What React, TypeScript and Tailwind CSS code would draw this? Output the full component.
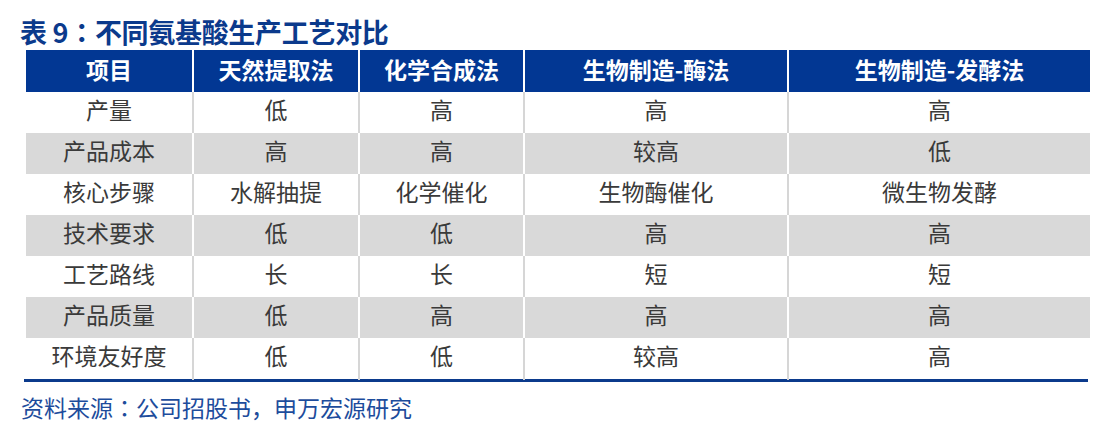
const font = { fontFamily: '"Noto Sans CJK SC", "Noto Sans", sans-serif' }
const tcFont = { fontFamily: '"Noto Sans CJK TC", sans-serif' }

const headers = ['项目', '天然提取法', '化学合成法', '生物制造-酶法', '生物制造-发酵法']

const rows: string[][] = [
  ['产量', '低', '高', '高', '高'],
  ['产品成本', '高', '高', '较高', '低'],
  ['核心步骤', '水解抽提', '化学催化', '生物酶催化', '微生物发酵'],
  ['技术要求', '低', '低', '高', '高'],
  ['工艺路线', '长', '长', '短', '短'],
  ['产品质量', '低', '高', '高', '高'],
  ['环境友好度', '低', '低', '较高', '高'],
]

const cols = 'grid grid-cols-[166px_166px_165px_264px_303px]'

// centred full-width colon, as in the source document
function Colon() {
  return (
    <span lang="zh-TW" style={tcFont}>
      ：
    </span>
  )
}

export default function App() {
  return (
    <div lang="zh-CN" className="w-[1101px] h-[431px] bg-white overflow-hidden" style={font}>
      {/* Title */}
      <div className="pt-[13px] pl-[20px]">
        <h1 className="h-[37px] leading-[37px] text-[27px] font-bold text-[#0b3a8c] tracking-[-0.3px]">
          表 9<Colon />不同氨基酸生产工艺对比
        </h1>
      </div>

      {/* Table */}
      <div className="ml-[26px] w-[1064px]">
        <div className={`${cols} h-[42px] bg-[#023793]`}>
          {headers.map((h, i) => (
            <div
              key={h}
              className={`flex items-center justify-center text-white font-bold text-[23px] pb-[3px] ${i > 0 ? 'border-l-2 border-white' : ''}`}
            >
              {h}
            </div>
          ))}
        </div>
        {rows.map((row, r) => {
          const grey = r % 2 === 1
          return (
            <div key={row[0]} className={`${cols} h-[41px] ${grey ? 'bg-[#d9d9d9]' : 'bg-white'}`}>
              {row.map((c, i) => (
                <div
                  key={i}
                  className={`flex items-center justify-center text-[23px] text-[#3a3a3a] pb-[7px] ${
                    i > 0 ? (grey ? 'border-l-2 border-white' : 'border-l-2 border-[#d6d6d6]') : ''
                  }`}
                >
                  {c}
                </div>
              ))}
            </div>
          )
        })}
      </div>
      <div className="ml-[24px] w-[1064px] h-[3px] bg-[#0b3a8c]" />

      {/* Source */}
      <p className="mt-[10px] pl-[21px] h-[30px] leading-[30px] text-[23px] text-[#1d4c9c]">
        资料来源<Colon />公司招股书，申万宏源研究
      </p>
    </div>
  )
}
